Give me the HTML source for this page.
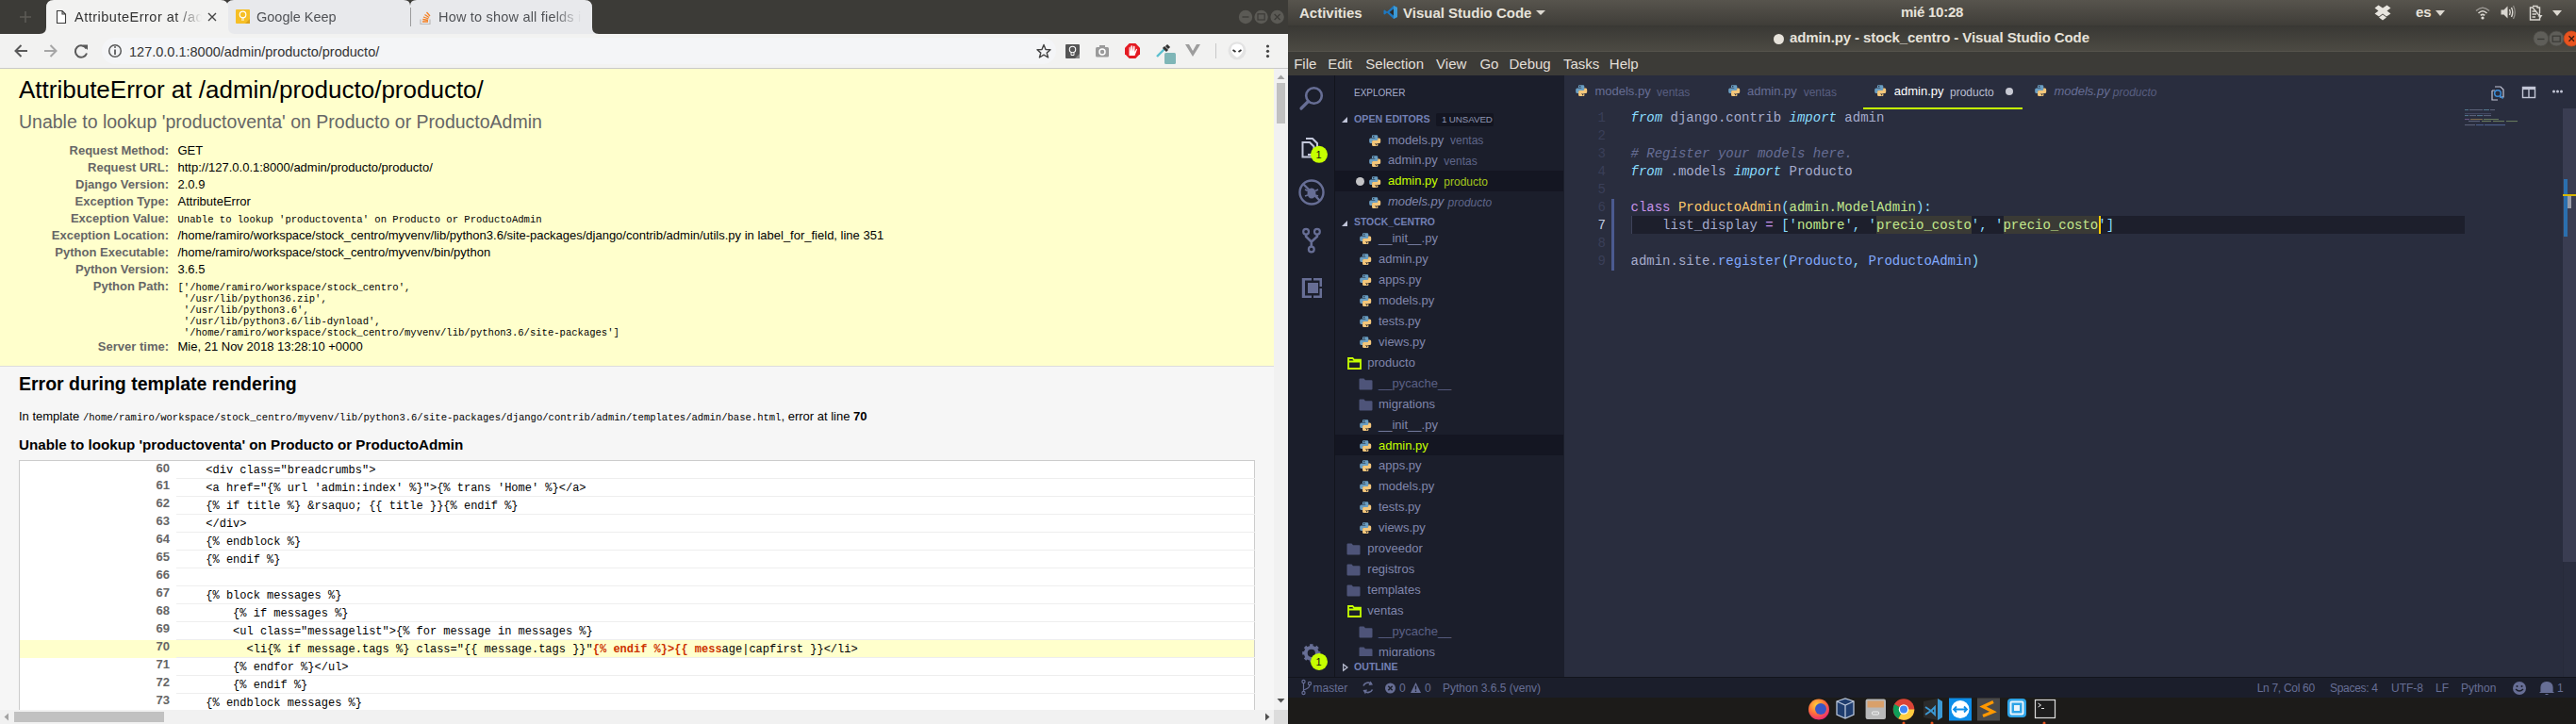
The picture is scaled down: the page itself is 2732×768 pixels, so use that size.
<!DOCTYPE html>
<html><head><meta charset="utf-8">
<style>
html,body{margin:0;padding:0;}
body{width:2732px;height:768px;overflow:hidden;position:relative;background:#1c1b19;font-family:"Liberation Sans",sans-serif;}
.abs{position:absolute;}
#chrome{position:absolute;left:0;top:0;width:1366px;height:768px;overflow:hidden;background:#f2f2f2;}
#tabbar{position:absolute;left:0;top:0;width:1366px;height:36px;background:#3c3b37;}
#toolbar{position:absolute;left:0;top:36px;width:1366px;height:36px;background:#f2f2f1;border-bottom:1px solid #c9c9c9;}
.tabt{font-size:14.5px;line-height:18px;color:#333;white-space:nowrap;overflow:hidden;-webkit-mask-image:linear-gradient(to right,#000 80%,transparent);}
#page{position:absolute;left:0;top:73px;width:1351px;height:680px;overflow:hidden;background:#fff;}
#vscroll{position:absolute;left:1351px;top:73px;width:15px;height:680px;background:#f1f1f1;}
#hscroll{position:absolute;left:0;top:753px;width:1351px;height:15px;background:#f1f1f1;}
#corner{position:absolute;left:1351px;top:753px;width:15px;height:15px;background:#dcdcdc;}

/* django */
#page h1,#page h2,#page h3,#page p,#page pre,#page table,#page th,#page td,#page code{margin:0;padding:0;}
#page{font-size:13px;color:#000;}
#summary{background:#ffc;padding:7px 20px 11px 20px;border-bottom:1px solid #ddd;}
#summary h1{font-weight:normal;font-size:26px;line-height:30px;}
#summary pre.ev{font-family:"Liberation Sans",sans-serif;color:#666;font-size:19.5px;line-height:22px;margin:8px 0 11px 0;}
#page table{border-collapse:collapse;}
#page table.meta{border:none;background:transparent;}
#page table.meta th{width:156px;text-align:right;color:#666;padding:2px 6.5px 2px 3px;vertical-align:top;font-weight:bold;line-height:14px;}
#page table.meta td{padding:2px 3px;vertical-align:top;line-height:14px;}
#page table.meta pre{font-family:"Liberation Mono",monospace;font-size:10.56px;line-height:12px;position:relative;top:2px;}
#page table.meta tr.pp td{padding-bottom:2px;}
#template{background:#f6f6f6;padding:6.5px 20px 10px 20px;}
#page #template h2{font-size:19.5px;line-height:22px;margin:0 0 16.5px 0;}
#page #template p{line-height:15px;}
#page #template p code{font-family:"Liberation Mono",monospace;font-size:10.56px;}
#page #template h3{font-size:15.2px;margin:11.7px 0 8.6px 0;line-height:17px;}
#page table.source{border:1px solid #ccc;width:100%;background:#fff;}
#page table.source th{width:156px;text-align:right;color:#666;padding:0.6px 6.5px 3.4px 3px;vertical-align:top;line-height:14px;}
#page table.source td{font-family:"Liberation Mono",monospace;font-size:12px;white-space:pre;border-bottom:1px solid #eee;padding:2.6px 3px 1.4px 3px;line-height:14px;}
#page tr.error th,#page tr.error td{background:#ffc;}
.specific{color:#cc3300;font-weight:bold;}

/* vscode */
.t{position:absolute;white-space:nowrap;font-family:"Liberation Sans",sans-serif;}
.mono{font-family:"Liberation Mono",monospace;}
.ic{position:absolute;overflow:visible;}
#vs{position:absolute;left:1366px;top:0;width:1366px;height:768px;overflow:hidden;background:#292d3e;}
#topbar{position:absolute;left:0;top:0;width:1366px;height:27px;background:linear-gradient(#57544d,#3f3d38);}
#titlebar{position:absolute;left:0;top:27px;width:1366px;height:28px;background:linear-gradient(#393834,#4c4a43);border-bottom:1px solid #55534b;box-sizing:border-box;}
#menubar{position:absolute;left:0;top:55px;width:1366px;height:25px;background:#3c3b37;}
#actbar{position:absolute;left:0;top:80px;width:49px;height:638px;background:#1b1e2b;border-right:1px solid #12141c;}
#sidebar{position:absolute;left:50px;top:80px;width:243px;height:638px;background:#1b1e2b;}
#editor{position:absolute;left:293px;top:80px;width:1073px;height:638px;background:#292d3e;}
#status{position:absolute;left:0;top:718px;width:1366px;height:22px;background:#1b1e2b;border-top:1px solid #12141c;box-sizing:border-box;}
#dock{position:absolute;left:0;top:740px;width:1366px;height:28px;background:#1c1b19;}
</style></head>
<body>
<div id="chrome">
  <div id="tabbar">
    <svg width="1366" height="36" style="position:absolute;left:0;top:0">
      <path d="M240 8 Q240 0 248 0 L428 0 Q435 0 435 6 Q435 0 442 0 L620 0 Q628 0 628 8 L628 29 Q628 36 635 36 L235 36 Q242 36 242 29 Z" fill="#e8e9ec"/>
      <path d="M42 36 Q49 36 49 29 L49 8 Q49 0 57 0 L234 0 Q242 0 242 8 L242 29 Q242 36 249 36 Z" fill="#f2f2f1"/>
      <line x1="435.5" y1="8" x2="435.5" y2="28" stroke="#9c9c9c" stroke-width="1"/>
      <path d="M21 18 H33 M27 12 V24" stroke="#5c5b56" stroke-width="1.6"/>
      <path d="M60.5 11.5 H66 L69.5 15 V24.5 H60.5 Z M66 11.5 V15 H69.5" fill="#fff" stroke="#3c3c3c" stroke-width="1.1"/>
      <path d="M221 14 L229 22 M229 14 L221 22" stroke="#444" stroke-width="1.4"/>
      <rect x="250" y="10" width="15" height="15" rx="1" fill="#f6bf26"/>
      <path d="M260 25 L265 20 V25 Z" fill="#dba11a"/>
      <circle cx="257.5" cy="15.5" r="3.3" fill="none" stroke="#fff" stroke-width="1.2"/>
      <path d="M256 19 H259 M256 21 H259" stroke="#fff" stroke-width="1"/>
      <path d="M446 20.5 V25.5 H456 V20.5" fill="none" stroke="#bcbbbb" stroke-width="1.2"/>
      <path d="M448 23 H454 M448.3 20.5 L454 21.5 M449 18 L454.5 20 M450.5 15.5 L455 18.5 M452.5 13 L456 17" stroke="#f48024" stroke-width="1.3"/>
      <circle cx="1321" cy="18" r="7.2" fill="#5b5a55"/>
      <circle cx="1337.6" cy="18" r="7.2" fill="#5b5a55"/>
      <circle cx="1354.6" cy="18" r="7.2" fill="#5b5a55"/>
      <path d="M1317.5 18 H1324.5" stroke="#3c3b37" stroke-width="1.3"/>
      <rect x="1334" y="14.8" width="7.2" height="6.2" fill="none" stroke="#3c3b37" stroke-width="1.2"/>
      <path d="M1351.6 15 L1357.6 21 M1357.6 15 L1351.6 21" stroke="#3c3b37" stroke-width="1.3"/>
    </svg>
    <div class="abs tabt" style="left:79px;top:9px;width:135px;letter-spacing:0.5px;">AttributeError at /admin/producto/producto/</div>
    <div class="abs tabt" style="left:272px;top:9px;width:150px;color:#505256;">Google Keep</div>
    <div class="abs tabt" style="left:465px;top:9px;width:152px;letter-spacing:0.2px;color:#505256;">How to show all fields in the Django admin</div>
  </div>
  <div id="toolbar">
    <div class="abs" style="left:108px;top:4px;width:1012px;height:28px;border-radius:14px;background:#f4f5f7;"></div>
    <svg width="1366" height="36" style="position:absolute;left:0;top:0">
      <path d="M29 18 H16.5 M22.5 12 L16.5 18 L22.5 24" fill="none" stroke="#5a5a5a" stroke-width="2"/>
      <path d="M47 18 H59.5 M53.5 12 L59.5 18 L53.5 24" fill="none" stroke="#a6a6a6" stroke-width="2"/>
      <path d="M91.5 15.5 A6.2 6.2 0 1 0 92 20.5" fill="none" stroke="#5a5a5a" stroke-width="2"/>
      <path d="M87.5 11.5 L93 11.5 L93 17 Z" fill="#5a5a5a"/>
      <circle cx="122" cy="18" r="6.3" fill="none" stroke="#5a5a5a" stroke-width="1.5"/>
      <path d="M122 16.5 V22" stroke="#5a5a5a" stroke-width="1.8"/>
      <circle cx="122" cy="14" r="1" fill="#5a5a5a"/>
      <path d="M1107 11.5 L1109 16.5 L1114 16.8 L1110.2 20.1 L1111.6 25 L1107 22.2 L1102.4 25 L1103.8 20.1 L1100 16.8 L1105 16.5 Z" fill="none" stroke="#444" stroke-width="1.4" stroke-linejoin="round"/>
      <rect x="1130" y="11" width="15" height="15" rx="1" fill="#555"/>
      <path d="M1140 26 L1145 21 V26 Z" fill="#888"/>
      <circle cx="1137.5" cy="16.5" r="3.2" fill="none" stroke="#fff" stroke-width="1.1"/>
      <path d="M1136 20 V22.5 H1139 V20" fill="none" stroke="#fff" stroke-width="1"/>
      <rect x="1162" y="14" width="14" height="10.5" rx="1.5" fill="#9a9a9a"/>
      <rect x="1166" y="12" width="6" height="3" fill="#9a9a9a"/>
      <circle cx="1169" cy="19" r="3" fill="none" stroke="#fff" stroke-width="1.5"/>
      <path d="M1197.7 10 H1204.3 L1209 14.7 V21.3 L1204.3 26 H1197.7 L1193 21.3 V14.7 Z" fill="#e41b23"/>
      <path d="M1197.5 23 V15 Q1197.5 13.5 1198.5 13.5 L1199 19 L1199.5 12.5 Q1201 12 1201 13 L1201.2 18.5 L1202 12.8 Q1203.5 12.5 1203.5 13.5 L1203.5 19 L1205 16 Q1206 15.5 1206 16.5 L1203.5 23 Z" fill="#fff"/>
      <path d="M1227 24 L1235 16" stroke="#5bbfcf" stroke-width="2.4"/>
      <path d="M1234 14 L1238 18 M1237 12 L1240 15" stroke="#333" stroke-width="3"/>
      <rect x="1235" y="20" width="12" height="12" rx="1.5" fill="#7fb6b7"/>
      <path d="M1257 11 L1265 24 L1273 11 H1269 L1265 18 L1261 11 Z" fill="#9d9d9d"/>
      <line x1="1289.5" y1="10" x2="1289.5" y2="26" stroke="#c8c8c8"/>
      <circle cx="1312" cy="17.7" r="9.5" fill="#e3e3e3"/>
      <path d="M1312 10.5 Q1318 10.5 1318.5 16.5 Q1318 22 1312 25 Q1306 22 1305.5 16.5 Q1306 10.5 1312 10.5 Z" fill="#fff"/>
      <path d="M1307.5 17 L1310.5 19 M1316.5 17 L1313.5 19" stroke="#333" stroke-width="1.8"/>
      <circle cx="1344.5" cy="13" r="1.6" fill="#444"/>
      <circle cx="1344.5" cy="18.3" r="1.6" fill="#444"/>
      <circle cx="1344.5" cy="23.6" r="1.6" fill="#444"/>
    </svg>
    <div class="abs" style="left:137px;top:10.5px;font-size:14.5px;line-height:16px;color:#333;white-space:nowrap;">127.0.0.1:8000/admin/producto/producto/</div>
  </div>
  <div id="page">
    <div id="summary">
      <h1>AttributeError at /admin/producto/producto/</h1>
      <pre class="ev">Unable to lookup 'productoventa' on Producto or ProductoAdmin</pre>
      <table class="meta">
        <tr><th>Request Method:</th><td>GET</td></tr>
        <tr><th>Request URL:</th><td>http://127.0.0.1:8000/admin/producto/producto/</td></tr>
        <tr><th>Django Version:</th><td>2.0.9</td></tr>
        <tr><th>Exception Type:</th><td>AttributeError</td></tr>
        <tr><th>Exception Value:</th><td><pre>Unable to lookup 'productoventa' on Producto or ProductoAdmin</pre></td></tr>
        <tr><th>Exception Location:</th><td>/home/ramiro/workspace/stock_centro/myvenv/lib/python3.6/site-packages/django/contrib/admin/utils.py in label_for_field, line 351</td></tr>
        <tr><th>Python Executable:</th><td>/home/ramiro/workspace/stock_centro/myvenv/bin/python</td></tr>
        <tr><th>Python Version:</th><td>3.6.5</td></tr>
        <tr class="pp"><th>Python Path:</th><td><pre>['/home/ramiro/workspace/stock_centro',
 '/usr/lib/python36.zip',
 '/usr/lib/python3.6',
 '/usr/lib/python3.6/lib-dynload',
 '/home/ramiro/workspace/stock_centro/myvenv/lib/python3.6/site-packages']</pre></td></tr>
        <tr><th>Server time:</th><td>Mie, 21 Nov 2018 13:28:10 +0000</td></tr>
      </table>
    </div>
    <div id="template">
      <h2>Error during template rendering</h2>
      <p>In template <code>/home/ramiro/workspace/stock_centro/myvenv/lib/python3.6/site-packages/django/contrib/admin/templates/admin/base.html</code>, error at line <strong>70</strong></p>
      <h3>Unable to lookup 'productoventa' on Producto or ProductoAdmin</h3>
      <table class="source">
        <tr><th>60</th><td>    &lt;div class="breadcrumbs"&gt;</td></tr>
        <tr><th>61</th><td>    &lt;a href="{% url 'admin:index' %}"&gt;{% trans 'Home' %}&lt;/a&gt;</td></tr>
        <tr><th>62</th><td>    {% if title %} &amp;rsaquo; {{ title }}{% endif %}</td></tr>
        <tr><th>63</th><td>    &lt;/div&gt;</td></tr>
        <tr><th>64</th><td>    {% endblock %}</td></tr>
        <tr><th>65</th><td>    {% endif %}</td></tr>
        <tr><th>66</th><td>    </td></tr>
        <tr><th>67</th><td>    {% block messages %}</td></tr>
        <tr><th>68</th><td>        {% if messages %}</td></tr>
        <tr><th>69</th><td>        &lt;ul class="messagelist"&gt;{% for message in messages %}</td></tr>
        <tr class="error"><th>70</th><td>          &lt;li{% if message.tags %} class="{{ message.tags }}"<span class="specific">{% endif %}&gt;{{ mess</span>age|capfirst }}&lt;/li&gt;</td></tr>
        <tr><th>71</th><td>        {% endfor %}&lt;/ul&gt;</td></tr>
        <tr><th>72</th><td>        {% endif %}</td></tr>
        <tr><th>73</th><td>    {% endblock messages %}</td></tr>
        <tr><th>74</th><td>    </td></tr>
      </table>
    </div>
  </div>
  <div id="vscroll">
    <svg width="15" height="680" style="position:absolute;left:0;top:0">
      <path d="M3.5 11 L7.5 6.5 L11.5 11 Z" fill="#a3a3a3"/>
      <rect x="3" y="15" width="9" height="43" fill="#c1c1c1"/>
      <path d="M3.5 668 L7.5 672.5 L11.5 668 Z" fill="#505050"/>
    </svg>
  </div>
  <div id="hscroll">
    <svg width="1351" height="15" style="position:absolute;left:0;top:0">
      <path d="M9 3.5 L4.5 7.5 L9 11.5 Z" fill="#a3a3a3"/>
      <rect x="15" y="2" width="159" height="11" fill="#c1c1c1"/>
      <path d="M1342 3.5 L1346.5 7.5 L1342 11.5 Z" fill="#505050"/>
    </svg>
  </div>
  <div id="corner"></div>
</div>

<div id="vs">
<svg width="0" height="0" style="position:absolute"><defs><g id="py"><path d="M4.2 0.3 H8.3 Q9.8 0.3 9.8 1.8 V5.2 Q9.8 6.6 8.4 6.6 H4.6 Q3.4 6.6 3.4 7.8 V9.4 H1.6 Q0.2 9.4 0.2 7.6 V5.2 Q0.2 3.6 1.8 3.6 H6.6 V3.1 H3.1 V1.6 Q3.1 0.3 4.2 0.3 Z" fill="#6a9ec2"/><path d="M8.8 12.7 H4.7 Q3.2 12.7 3.2 11.2 V7.8 Q3.2 6.4 4.6 6.4 H8.4 Q9.6 6.4 9.6 5.2 V3.6 H11.4 Q12.8 3.6 12.8 5.4 V7.8 Q12.8 9.4 11.2 9.4 H6.4 V9.9 H9.9 V11.4 Q9.9 12.7 8.8 12.7 Z" fill="#f4c77b"/><circle cx="5" cy="1.8" r="0.7" fill="#1b1e2b"/><circle cx="8" cy="11.2" r="0.7" fill="#1b1e2b"/></g></defs></svg>
<div id="topbar"></div>
<div class="t" style="left:12px;top:3.60px;font-size:15px;line-height:20px;color:#e6e2da;font-weight:bold;font-style:normal;">Activities</div>
<svg class="ic" style="left:101px;top:5px" width="16" height="16" viewBox="0 0 16 16"><path d="M11 1 L15 3 V13 L11 15 L4 8.5 L1.5 10.5 L0.5 10 V6 L1.5 5.5 L4 7.5 Z" fill="#1d78c1"/><path d="M11 4.5 V11.5 L6.5 8 Z" fill="#2a2a2a"/><path d="M11 1 L15 3 V13 L11 15 Z" fill="#3c99d4"/></svg>
<div class="t" style="left:122px;top:3.60px;font-size:15px;line-height:20px;color:#e6e2da;font-weight:bold;font-style:normal;">Visual Studio Code</div>
<svg class="ic" style="left:263px;top:10.5px" width="10" height="5"><path d="M0 0 H10 L5 5 Z" fill="#dcd8d0"/></svg>
<div class="t" style="left:650px;top:3.00px;font-size:15px;line-height:20px;color:#e6e2da;font-weight:bold;font-style:normal;letter-spacing:-0.25px;">mi&eacute; 10:28</div>
<svg class="ic" style="left:1152px;top:5px" width="18" height="17" viewBox="0 0 18 17"><path d="M4.5 0.5 L9 3.5 L13.5 0.5 L17.5 3.5 L13.5 6.5 L17.5 9.5 L13 12.5 L9 9.5 L5 12.5 L0.5 9.5 L4.5 6.5 L0.5 3.5 Z M5 13.5 L9 10.5 L13 13.5 L9 16.5 Z" fill="#e8e5df"/></svg>
<div class="t" style="left:1196px;top:3.40px;font-size:15px;line-height:20px;color:#e6e2da;font-weight:bold;font-style:normal;">es</div>
<svg class="ic" style="left:1217px;top:10.5px" width="10" height="6"><path d="M0 0 H10 L5 6 Z" fill="#dcd8d0"/></svg>
<svg class="ic" style="left:1259px;top:6px" width="16" height="15" viewBox="0 0 16 15"><path d="M1 5.5 Q8 -1 15 5.5" fill="none" stroke="#9b9893" stroke-width="1.6"/><path d="M3.5 8 Q8 3.5 12.5 8" fill="none" stroke="#d9d6d0" stroke-width="1.6"/><path d="M5.8 10.3 Q8 8.3 10.2 10.3" fill="none" stroke="#d9d6d0" stroke-width="1.6"/><circle cx="8" cy="13" r="1.6" fill="#e0ddd7"/></svg>
<svg class="ic" style="left:1286px;top:5px" width="17" height="16" viewBox="0 0 17 16"><path d="M0.5 5.5 H3.5 L7.5 1.5 V14.5 L3.5 10.5 H0.5 Z" fill="#d9d6d0"/><path d="M9.5 5 Q11 8 9.5 11" fill="none" stroke="#d9d6d0" stroke-width="1.4"/><path d="M11.5 3 Q14 8 11.5 13" fill="none" stroke="#d9d6d0" stroke-width="1.4"/><path d="M13.5 1 Q17 8 13.5 15" fill="none" stroke="#8f8c87" stroke-width="1.3"/></svg>
<svg class="ic" style="left:1316px;top:5px" width="16" height="17" viewBox="0 0 16 17"><path d="M4 1.5 H9 V3 H11.5 V9 M11.5 12 V16 H1.5 V3 H4 Z" fill="none" stroke="#d9d6d0" stroke-width="1.4"/><path d="M3.5 7 H8 M3.5 10 H8 M3.5 13 H7" stroke="#d9d6d0" stroke-width="1.4"/><path d="M12 8 L9.5 12.5 H12 L11 16 L14.5 11 H12 Z" fill="#d9d6d0"/></svg>
<svg class="ic" style="left:1341px;top:10.5px" width="10" height="6"><path d="M0 0 H10 L5 6 Z" fill="#dcd8d0"/></svg>
<div id="titlebar"></div>
<div class="abs" style="left:515px;top:35.5px;width:11px;height:11px;border-radius:50%;background:#e6e2da;"></div>
<div class="t" style="left:532px;top:30.10px;font-size:15px;line-height:20px;color:#e6e2da;font-weight:bold;font-style:normal;letter-spacing:-0.1px;">admin.py - stock_centro - Visual Studio Code</div>
<svg class="ic" style="left:1318px;top:31px" width="48" height="20">
<circle cx="10.8" cy="10" r="8" fill="#5f5e59" stroke="#4a4944" stroke-width="0.8"/>
<circle cx="27.2" cy="10" r="8" fill="#5f5e59" stroke="#4a4944" stroke-width="0.8"/>
<circle cx="43.2" cy="10" r="8" fill="#e9541f" stroke="#c9461a" stroke-width="0.8"/>
<path d="M7 10.5 H14.5" stroke="#3a3935" stroke-width="1.3"/>
<rect x="23.2" y="7.2" width="8" height="6" fill="none" stroke="#3a3935" stroke-width="1.2"/>
<path d="M40.5 7.3 L46 12.8 M46 7.3 L40.5 12.8" stroke="#3a1a10" stroke-width="1.3"/>
</svg>
<div id="menubar"></div>
<div class="t" style="left:6.2px;top:57.70px;font-size:15px;line-height:20px;color:#e2dfd7;font-weight:normal;font-style:normal;">File</div>
<div class="t" style="left:42.2px;top:57.70px;font-size:15px;line-height:20px;color:#e2dfd7;font-weight:normal;font-style:normal;">Edit</div>
<div class="t" style="left:82.3px;top:57.70px;font-size:15px;line-height:20px;color:#e2dfd7;font-weight:normal;font-style:normal;">Selection</div>
<div class="t" style="left:157.1px;top:57.70px;font-size:15px;line-height:20px;color:#e2dfd7;font-weight:normal;font-style:normal;">View</div>
<div class="t" style="left:203.4px;top:57.70px;font-size:15px;line-height:20px;color:#e2dfd7;font-weight:normal;font-style:normal;">Go</div>
<div class="t" style="left:234.5px;top:57.70px;font-size:15px;line-height:20px;color:#e2dfd7;font-weight:normal;font-style:normal;">Debug</div>
<div class="t" style="left:291.9px;top:57.70px;font-size:15px;line-height:20px;color:#e2dfd7;font-weight:normal;font-style:normal;">Tasks</div>
<div class="t" style="left:340.8px;top:57.70px;font-size:15px;line-height:20px;color:#e2dfd7;font-weight:normal;font-style:normal;">Help</div>
<div id="actbar"></div>
<svg class="ic" style="left:0;top:80px" width="49" height="640"><circle cx="27.5" cy="21.5" r="8.3" fill="none" stroke="#676e95" stroke-width="2.6"/><path d="M21.5 27.5 L14 35" stroke="#676e95" stroke-width="3.2" stroke-linecap="round"/><path d="M19 67 H26 L31 72 V84 H21" fill="none" stroke="#c3c7da" stroke-width="2"/><path d="M15.5 71 H23 L27.5 75.5 V86.5 H15.5 Z" fill="none" stroke="#c3c7da" stroke-width="2"/><circle cx="33" cy="83.8" r="9" fill="#c6ff00"/><circle cx="25" cy="124" r="12.5" fill="none" stroke="#676e95" stroke-width="2.4"/><path d="M16 115 L34 133" stroke="#676e95" stroke-width="2.4"/><ellipse cx="25" cy="125" rx="4.5" ry="5.5" fill="#676e95"/><path d="M18 121 L21 122.5 M32 121 L29 122.5 M18 128 L21 127 M32 128 L29 127" stroke="#676e95" stroke-width="1.6"/><circle cx="19.1" cy="165.8" r="2.9" fill="none" stroke="#676e95" stroke-width="2.2"/><circle cx="30.9" cy="165.8" r="2.9" fill="none" stroke="#676e95" stroke-width="2.2"/><circle cx="24.8" cy="184.5" r="2.9" fill="none" stroke="#676e95" stroke-width="2.2"/><path d="M19.1 168.8 V171 L24.8 176.5 V181.5 M30.9 168.8 V171 L24.8 176.5" fill="none" stroke="#676e95" stroke-width="2.6"/><path d="M14.8 214.9 H25 V217.5 H18 V233.5 H25 V236 H14.8 Z" fill="#676e95"/><path d="M27 214.9 H36 V224 H33.5 V217.5 H27 Z" fill="#676e95"/><path d="M27 233.5 H33.5 V226 H36 V236 H27 Z" fill="#676e95"/><rect x="21" y="220" width="11" height="11" fill="#676e95"/><g transform="translate(24.8,612.8)"><circle r="6" fill="none" stroke="#676e95" stroke-width="3.8"/><rect x="-1.7" y="-9.6" width="3.4" height="4" fill="#676e95" transform="rotate(0)"/><rect x="-1.7" y="-9.6" width="3.4" height="4" fill="#676e95" transform="rotate(45)"/><rect x="-1.7" y="-9.6" width="3.4" height="4" fill="#676e95" transform="rotate(90)"/><rect x="-1.7" y="-9.6" width="3.4" height="4" fill="#676e95" transform="rotate(135)"/><rect x="-1.7" y="-9.6" width="3.4" height="4" fill="#676e95" transform="rotate(180)"/><rect x="-1.7" y="-9.6" width="3.4" height="4" fill="#676e95" transform="rotate(225)"/><rect x="-1.7" y="-9.6" width="3.4" height="4" fill="#676e95" transform="rotate(270)"/><rect x="-1.7" y="-9.6" width="3.4" height="4" fill="#676e95" transform="rotate(315)"/></g><circle cx="33" cy="621.9" r="9" fill="#c6ff00"/></svg>
<div class="t" style="left:29.5px;top:156.99px;font-size:11px;line-height:14px;color:#111;font-weight:normal;font-style:normal;">1</div>
<div class="t" style="left:29.5px;top:695.09px;font-size:11px;line-height:14px;color:#111;font-weight:normal;font-style:normal;">1</div>
<div id="sidebar"></div>
<div class="t" style="left:70px;top:91.53px;font-size:10px;line-height:14px;color:#a6accd;font-weight:normal;font-style:normal;">EXPLORER</div>
<svg class="ic" style="left:57px;top:124px" width="7" height="7"><path d="M6 0 V6 H0 Z" fill="#c0c4d8"/></svg>
<div class="t" style="left:70px;top:119.29px;font-size:10.7px;line-height:14px;color:#7380b5;font-weight:bold;font-style:normal;">OPEN EDITORS</div>
<div class="abs" style="left:157px;top:120px;width:61px;height:13.5px;background:#131521;border-radius:2px;"></div>
<div class="t" style="left:162.9px;top:119.80px;font-size:9.8px;line-height:14px;color:#8f95b3;font-weight:normal;font-style:normal;letter-spacing:-0.1px;">1 UNSAVED</div>
<div class="abs" style="left:50px;top:181px;width:242px;height:22px;background:#141622;"></div>
<svg class="ic" style="left:85.8px;top:143.0px" width="12.4" height="12.4" viewBox="0 0 13 13"><use href="#py"/></svg>
<div class="t" style="left:106px;top:137.80px;font-size:13px;line-height:22px;color:#8086ac;font-weight:normal;font-style:normal;">models.py</div>
<div class="t" style="left:172px;top:138.14px;font-size:12px;line-height:22px;color:#5f668a;font-weight:normal;font-style:normal;">ventas</div>
<svg class="ic" style="left:85.8px;top:164.6px" width="12.4" height="12.4" viewBox="0 0 13 13"><use href="#py"/></svg>
<div class="t" style="left:106px;top:159.40px;font-size:13px;line-height:22px;color:#8086ac;font-weight:normal;font-style:normal;">admin.py</div>
<div class="t" style="left:165.3px;top:159.74px;font-size:12px;line-height:22px;color:#5f668a;font-weight:normal;font-style:normal;">ventas</div>
<svg class="ic" style="left:85.8px;top:186.5px" width="12.4" height="12.4" viewBox="0 0 13 13"><use href="#py"/></svg>
<div class="t" style="left:106px;top:181.30px;font-size:13px;line-height:22px;color:#c6ff00;font-weight:normal;font-style:normal;">admin.py</div>
<div class="t" style="left:165.3px;top:181.64px;font-size:12px;line-height:22px;color:#a4c71c;font-weight:normal;font-style:normal;">producto</div>
<svg class="ic" style="left:85.8px;top:208.6px" width="12.4" height="12.4" viewBox="0 0 13 13"><use href="#py"/></svg>
<div class="t" style="left:106px;top:203.40px;font-size:13px;line-height:22px;color:#8086ac;font-weight:normal;font-style:italic;">models.py</div>
<div class="t" style="left:169.6px;top:203.74px;font-size:12px;line-height:22px;color:#5f668a;font-weight:normal;font-style:italic;">producto</div>
<div class="abs" style="left:71.5px;top:188.3px;width:9px;height:9px;border-radius:50%;background:#c3c3c6;"></div>
<svg class="ic" style="left:57px;top:233.5px" width="7" height="7"><path d="M6 0 V6 H0 Z" fill="#c0c4d8"/></svg>
<div class="t" style="left:70px;top:228.90px;font-size:10.4px;line-height:14px;color:#7380b5;font-weight:bold;font-style:normal;">STOCK_CENTRO</div>
<div class="abs" style="left:50px;top:460.5px;width:242px;height:22.3px;background:#141622;"></div>
<div class="abs" style="left:0;top:0;width:1366px;height:696px;overflow:hidden;"><svg class="ic" style="left:75.5px;top:247.0px" width="12.4" height="12.4" viewBox="0 0 13 13"><use href="#py"/></svg><div class="t" style="left:96px;top:242.00px;font-size:13px;line-height:22px;color:#8086ac;font-weight:normal;font-style:normal;">__init__.py</div><svg class="ic" style="left:75.5px;top:268.95px" width="12.4" height="12.4" viewBox="0 0 13 13"><use href="#py"/></svg><div class="t" style="left:96px;top:263.95px;font-size:13px;line-height:22px;color:#8086ac;font-weight:normal;font-style:normal;">admin.py</div><svg class="ic" style="left:75.5px;top:290.9px" width="12.4" height="12.4" viewBox="0 0 13 13"><use href="#py"/></svg><div class="t" style="left:96px;top:285.90px;font-size:13px;line-height:22px;color:#8086ac;font-weight:normal;font-style:normal;">apps.py</div><svg class="ic" style="left:75.5px;top:312.85px" width="12.4" height="12.4" viewBox="0 0 13 13"><use href="#py"/></svg><div class="t" style="left:96px;top:307.85px;font-size:13px;line-height:22px;color:#8086ac;font-weight:normal;font-style:normal;">models.py</div><svg class="ic" style="left:75.5px;top:334.8px" width="12.4" height="12.4" viewBox="0 0 13 13"><use href="#py"/></svg><div class="t" style="left:96px;top:329.80px;font-size:13px;line-height:22px;color:#8086ac;font-weight:normal;font-style:normal;">tests.py</div><svg class="ic" style="left:75.5px;top:356.75px" width="12.4" height="12.4" viewBox="0 0 13 13"><use href="#py"/></svg><div class="t" style="left:96px;top:351.75px;font-size:13px;line-height:22px;color:#8086ac;font-weight:normal;font-style:normal;">views.py</div><svg class="ic" style="left:62.5px;top:378.8px" width="15" height="13" viewBox="0 0 15 13"><path d="M1 1 H5.5 L7 2.7 H14 V12 H1 Z M1 4.5 H14" fill="none" stroke="#c6ff00" stroke-width="1.8"/></svg><div class="t" style="left:84.3px;top:373.70px;font-size:13px;line-height:22px;color:#8086ac;font-weight:normal;font-style:normal;">producto</div><svg class="ic" style="left:74.6px;top:400.75px" width="15" height="13" viewBox="0 0 15 13"><path d="M0.5 1.5 Q0.5 0.5 1.5 0.5 H5.5 L7 2.2 H13.5 Q14.5 2.2 14.5 3.2 V11.5 Q14.5 12.5 13.5 12.5 H1.5 Q0.5 12.5 0.5 11.5 Z" fill="#4e5479"/></svg><div class="t" style="left:96px;top:395.65px;font-size:13px;line-height:22px;color:#5b6186;font-weight:normal;font-style:normal;">__pycache__</div><svg class="ic" style="left:74.6px;top:422.70000000000005px" width="15" height="13" viewBox="0 0 15 13"><path d="M0.5 1.5 Q0.5 0.5 1.5 0.5 H5.5 L7 2.2 H13.5 Q14.5 2.2 14.5 3.2 V11.5 Q14.5 12.5 13.5 12.5 H1.5 Q0.5 12.5 0.5 11.5 Z" fill="#4e5479"/></svg><div class="t" style="left:96px;top:417.60px;font-size:13px;line-height:22px;color:#8086ac;font-weight:normal;font-style:normal;">migrations</div><svg class="ic" style="left:75.5px;top:444.54999999999995px" width="12.4" height="12.4" viewBox="0 0 13 13"><use href="#py"/></svg><div class="t" style="left:96px;top:439.55px;font-size:13px;line-height:22px;color:#8086ac;font-weight:normal;font-style:normal;">__init__.py</div><svg class="ic" style="left:75.5px;top:466.5px" width="12.4" height="12.4" viewBox="0 0 13 13"><use href="#py"/></svg><div class="t" style="left:96px;top:461.50px;font-size:13px;line-height:22px;color:#c6ff00;font-weight:normal;font-style:normal;">admin.py</div><svg class="ic" style="left:75.5px;top:488.45px" width="12.4" height="12.4" viewBox="0 0 13 13"><use href="#py"/></svg><div class="t" style="left:96px;top:483.45px;font-size:13px;line-height:22px;color:#8086ac;font-weight:normal;font-style:normal;">apps.py</div><svg class="ic" style="left:75.5px;top:510.4px" width="12.4" height="12.4" viewBox="0 0 13 13"><use href="#py"/></svg><div class="t" style="left:96px;top:505.40px;font-size:13px;line-height:22px;color:#8086ac;font-weight:normal;font-style:normal;">models.py</div><svg class="ic" style="left:75.5px;top:532.3499999999999px" width="12.4" height="12.4" viewBox="0 0 13 13"><use href="#py"/></svg><div class="t" style="left:96px;top:527.35px;font-size:13px;line-height:22px;color:#8086ac;font-weight:normal;font-style:normal;">tests.py</div><svg class="ic" style="left:75.5px;top:554.3px" width="12.4" height="12.4" viewBox="0 0 13 13"><use href="#py"/></svg><div class="t" style="left:96px;top:549.30px;font-size:13px;line-height:22px;color:#8086ac;font-weight:normal;font-style:normal;">views.py</div><svg class="ic" style="left:62px;top:576.35px" width="15" height="13" viewBox="0 0 15 13"><path d="M0.5 1.5 Q0.5 0.5 1.5 0.5 H5.5 L7 2.2 H13.5 Q14.5 2.2 14.5 3.2 V11.5 Q14.5 12.5 13.5 12.5 H1.5 Q0.5 12.5 0.5 11.5 Z" fill="#4e5479"/></svg><div class="t" style="left:84.3px;top:571.25px;font-size:13px;line-height:22px;color:#8086ac;font-weight:normal;font-style:normal;">proveedor</div><svg class="ic" style="left:62px;top:598.3000000000001px" width="15" height="13" viewBox="0 0 15 13"><path d="M0.5 1.5 Q0.5 0.5 1.5 0.5 H5.5 L7 2.2 H13.5 Q14.5 2.2 14.5 3.2 V11.5 Q14.5 12.5 13.5 12.5 H1.5 Q0.5 12.5 0.5 11.5 Z" fill="#4e5479"/></svg><div class="t" style="left:84.3px;top:593.20px;font-size:13px;line-height:22px;color:#8086ac;font-weight:normal;font-style:normal;">registros</div><svg class="ic" style="left:62px;top:620.25px" width="15" height="13" viewBox="0 0 15 13"><path d="M0.5 1.5 Q0.5 0.5 1.5 0.5 H5.5 L7 2.2 H13.5 Q14.5 2.2 14.5 3.2 V11.5 Q14.5 12.5 13.5 12.5 H1.5 Q0.5 12.5 0.5 11.5 Z" fill="#4e5479"/></svg><div class="t" style="left:84.3px;top:615.15px;font-size:13px;line-height:22px;color:#8086ac;font-weight:normal;font-style:normal;">templates</div><svg class="ic" style="left:62.5px;top:642.1999999999999px" width="15" height="13" viewBox="0 0 15 13"><path d="M1 1 H5.5 L7 2.7 H14 V12 H1 Z M1 4.5 H14" fill="none" stroke="#c6ff00" stroke-width="1.8"/></svg><div class="t" style="left:84.3px;top:637.10px;font-size:13px;line-height:22px;color:#8086ac;font-weight:normal;font-style:normal;">ventas</div><svg class="ic" style="left:74.6px;top:664.15px" width="15" height="13" viewBox="0 0 15 13"><path d="M0.5 1.5 Q0.5 0.5 1.5 0.5 H5.5 L7 2.2 H13.5 Q14.5 2.2 14.5 3.2 V11.5 Q14.5 12.5 13.5 12.5 H1.5 Q0.5 12.5 0.5 11.5 Z" fill="#4e5479"/></svg><div class="t" style="left:96px;top:659.05px;font-size:13px;line-height:22px;color:#5b6186;font-weight:normal;font-style:normal;">__pycache__</div><svg class="ic" style="left:74.6px;top:686.1px" width="15" height="13" viewBox="0 0 15 13"><path d="M0.5 1.5 Q0.5 0.5 1.5 0.5 H5.5 L7 2.2 H13.5 Q14.5 2.2 14.5 3.2 V11.5 Q14.5 12.5 13.5 12.5 H1.5 Q0.5 12.5 0.5 11.5 Z" fill="#4e5479"/></svg><div class="t" style="left:96px;top:681.00px;font-size:13px;line-height:22px;color:#8086ac;font-weight:normal;font-style:normal;">migrations</div></div>
<svg class="ic" style="left:57.5px;top:703.5px" width="6" height="8"><path d="M0.7 0.7 L5 4 L0.7 7.3 Z" fill="none" stroke="#c0c4d8" stroke-width="1.2"/></svg>
<div class="t" style="left:70px;top:700.33px;font-size:10.6px;line-height:14px;color:#7380b5;font-weight:bold;font-style:normal;">OUTLINE</div>
<div id="editor"></div>
<svg class="ic" style="left:304.6px;top:89.5px" width="12.4" height="12.4" viewBox="0 0 13 13"><use href="#py"/></svg>
<div class="t" style="left:325.4px;top:87.30px;font-size:13px;line-height:20px;color:#676e95;font-weight:normal;font-style:normal;">models.py</div>
<div class="t" style="left:391px;top:87.64px;font-size:12px;line-height:20px;color:#585e80;font-weight:normal;font-style:normal;">ventas</div>
<svg class="ic" style="left:467px;top:89.5px" width="12.4" height="12.4" viewBox="0 0 13 13"><use href="#py"/></svg>
<div class="t" style="left:487px;top:87.30px;font-size:13px;line-height:20px;color:#676e95;font-weight:normal;font-style:normal;">admin.py</div>
<div class="t" style="left:546.7px;top:87.64px;font-size:12px;line-height:20px;color:#585e80;font-weight:normal;font-style:normal;">ventas</div>
<svg class="ic" style="left:622px;top:89.5px" width="12.4" height="12.4" viewBox="0 0 13 13"><use href="#py"/></svg>
<div class="t" style="left:642.8px;top:87.30px;font-size:13px;line-height:20px;color:#ffffff;font-weight:normal;font-style:normal;">admin.py</div>
<div class="t" style="left:702px;top:87.64px;font-size:12px;line-height:20px;color:#b9bdd0;font-weight:normal;font-style:normal;">producto</div>
<svg class="ic" style="left:792px;top:89.5px" width="12.4" height="12.4" viewBox="0 0 13 13"><use href="#py"/></svg>
<div class="t" style="left:812.4px;top:87.30px;font-size:13px;line-height:20px;color:#676e95;font-weight:normal;font-style:italic;">models.py</div>
<div class="t" style="left:874.8px;top:87.64px;font-size:12px;line-height:20px;color:#585e80;font-weight:normal;font-style:italic;">producto</div>
<div class="abs" style="left:761px;top:93px;width:8px;height:8px;border-radius:50%;background:#c7c9d3;"></div>
<div class="abs" style="left:610px;top:113.5px;width:169px;height:2px;background:#c6ff00;"></div>
<svg class="ic" style="left:1274px;top:89px" width="80" height="20"><path d="M6 3 H12 L15 6 V14 H11" fill="none" stroke="#c3c6d6" stroke-width="1.2"/><path d="M3 7 H6 M3 7 V17 H9" fill="none" stroke="#c3c6d6" stroke-width="1.2"/><circle cx="9" cy="10" r="3.3" fill="none" stroke="#3d8fd9" stroke-width="1.5"/><path d="M11.3 12.3 L14.5 15.5" stroke="#3d8fd9" stroke-width="1.6"/><rect x="35.5" y="3.5" width="13" height="11" fill="none" stroke="#c3c6d6" stroke-width="1.4"/><path d="M35.5 5 H48.5" stroke="#c3c6d6" stroke-width="2.2"/><path d="M42 4 V14.5" stroke="#c3c6d6" stroke-width="1.4"/><circle cx="68.5" cy="8" r="1.5" fill="#c3c6d6"/><circle cx="72.5" cy="8" r="1.5" fill="#c3c6d6"/><circle cx="76.5" cy="8" r="1.5" fill="#c3c6d6"/></svg>
<div class="abs" style="left:363.8px;top:229px;width:884px;height:19px;background:#1d1f2c;border-left:1px solid #3e4259;box-sizing:border-box;"></div>
<div class="abs" style="left:624px;top:229px;width:100.8px;height:19px;background:#3a3a35;"></div>
<div class="abs" style="left:758.8px;top:229px;width:100.9px;height:19px;background:#3a3a35;"></div>
<div class="abs" style="left:859.8px;top:229px;width:2px;height:19px;background:#ffcc00;"></div>
<div class="abs" style="left:342.5px;top:210.5px;width:3px;height:76px;background:#4b5a90;"></div>
<div class="t mono" style="left:323px;top:115.97px;font-size:14px;line-height:19px;color:#3a3f58;width:14px;text-align:right;">1</div>
<div class="t mono" style="left:323px;top:134.97px;font-size:14px;line-height:19px;color:#3a3f58;width:14px;text-align:right;">2</div>
<div class="t mono" style="left:323px;top:153.97px;font-size:14px;line-height:19px;color:#3a3f58;width:14px;text-align:right;">3</div>
<div class="t mono" style="left:323px;top:172.97px;font-size:14px;line-height:19px;color:#3a3f58;width:14px;text-align:right;">4</div>
<div class="t mono" style="left:323px;top:191.97px;font-size:14px;line-height:19px;color:#3a3f58;width:14px;text-align:right;">5</div>
<div class="t mono" style="left:323px;top:210.97px;font-size:14px;line-height:19px;color:#3a3f58;width:14px;text-align:right;">6</div>
<div class="t mono" style="left:323px;top:229.97px;font-size:14px;line-height:19px;color:#c3cee3;width:14px;text-align:right;">7</div>
<div class="t mono" style="left:323px;top:248.97px;font-size:14px;line-height:19px;color:#3a3f58;width:14px;text-align:right;">8</div>
<div class="t mono" style="left:323px;top:267.97px;font-size:14px;line-height:19px;color:#3a3f58;width:14px;text-align:right;">9</div>
<div class="t mono" style="left:363.5px;top:115.97px;font-size:14px;line-height:19px;color:#a6accd;white-space:pre;"><span style="color:#89ddff;font-style:italic;">from</span><span style="color:#a6accd;"> django.contrib </span><span style="color:#89ddff;font-style:italic;">import</span><span style="color:#a6accd;"> admin</span></div>
<div class="t mono" style="left:363.5px;top:153.97px;font-size:14px;line-height:19px;color:#a6accd;white-space:pre;"><span style="color:#676e95;font-style:italic;"># Register your models here.</span></div>
<div class="t mono" style="left:363.5px;top:172.97px;font-size:14px;line-height:19px;color:#a6accd;white-space:pre;"><span style="color:#89ddff;font-style:italic;">from</span><span style="color:#a6accd;"> .models </span><span style="color:#89ddff;font-style:italic;">import</span><span style="color:#a6accd;"> Producto</span></div>
<div class="t mono" style="left:363.5px;top:210.97px;font-size:14px;line-height:19px;color:#a6accd;white-space:pre;"><span style="color:#c792ea;">class</span><span style="color:#a6accd;"> </span><span style="color:#ffcb6b;">ProductoAdmin</span><span style="color:#89ddff;">(</span><span style="color:#c3e88d;">admin.ModelAdmin</span><span style="color:#89ddff;">):</span></div>
<div class="t mono" style="left:363.5px;top:229.97px;font-size:14px;line-height:19px;color:#a6accd;white-space:pre;"><span style="color:#a6accd;">    list_display </span><span style="color:#c792ea;">=</span><span style="color:#a6accd;"> </span><span style="color:#89ddff;">['</span><span style="color:#c3e88d;">nombre</span><span style="color:#89ddff;">', '</span><span style="color:#c3e88d;">precio_costo</span><span style="color:#89ddff;">', '</span><span style="color:#c3e88d;">precio_costo</span><span style="color:#89ddff;">']</span></div>
<div class="t mono" style="left:363.5px;top:267.97px;font-size:14px;line-height:19px;color:#a6accd;white-space:pre;"><span style="color:#a6accd;">admin.site.</span><span style="color:#82aaff;">register</span><span style="color:#89ddff;">(</span><span style="color:#82aaff;">Producto</span><span style="color:#89ddff;">, </span><span style="color:#82aaff;">ProductoAdmin</span><span style="color:#89ddff;">)</span></div>
<svg class="ic" style="left:1248px;top:115px" width="70" height="22"><rect x="0" y="1" width="4" height="1.1" fill="#89ddff" opacity="0.4"/><rect x="5" y="1" width="14" height="1.1" fill="#a6accd" opacity="0.4"/><rect x="20" y="1" width="6" height="1.1" fill="#89ddff" opacity="0.4"/><rect x="27" y="1" width="5" height="1.1" fill="#a6accd" opacity="0.4"/><rect x="0" y="5" width="28" height="1.1" fill="#676e95" opacity="0.4"/><rect x="0" y="7" width="4" height="1.1" fill="#89ddff" opacity="0.4"/><rect x="5" y="7" width="7" height="1.1" fill="#a6accd" opacity="0.4"/><rect x="13" y="7" width="6" height="1.1" fill="#89ddff" opacity="0.4"/><rect x="20" y="7" width="8" height="1.1" fill="#a6accd" opacity="0.4"/><rect x="0" y="11" width="5" height="1.1" fill="#c792ea" opacity="0.4"/><rect x="6" y="11" width="13" height="1.1" fill="#ffcb6b" opacity="0.4"/><rect x="20" y="11" width="16" height="1.1" fill="#c3e88d" opacity="0.4"/><rect x="4" y="13" width="12" height="1.1" fill="#a6accd" opacity="0.4"/><rect x="18" y="13" width="10" height="1.1" fill="#c3e88d" opacity="0.4"/><rect x="30" y="13" width="12" height="1.1" fill="#c3e88d" opacity="0.4"/><rect x="44" y="13" width="12" height="1.1" fill="#c3e88d" opacity="0.4"/><rect x="0" y="17" width="11" height="1.1" fill="#a6accd" opacity="0.4"/><rect x="12" y="17" width="8" height="1.1" fill="#82aaff" opacity="0.4"/><rect x="21" y="17" width="22" height="1.1" fill="#82aaff" opacity="0.4"/></svg>
<div class="abs" style="left:1351.5px;top:115px;width:14.5px;height:603px;background:#2a2e3f;border-left:1px solid #262a3a;box-sizing:border-box;"></div>
<div class="abs" style="left:1352px;top:115px;width:14px;height:481px;background:#3a3d52;"></div>
<div class="abs" style="left:1353px;top:190px;width:4px;height:61px;background:#2b6fae;"></div>
<div class="abs" style="left:1357px;top:206px;width:4px;height:15px;background:#9a9ca8;"></div>
<div class="abs" style="left:1352px;top:205.5px;width:14px;height:2px;background:#d7b600;"></div>
<div id="status"></div>
<svg class="ic" style="left:0;top:718px" width="1366" height="22"><circle cx="16.5" cy="5" r="1.6" fill="none" stroke="#676e95" stroke-width="1.2"/><circle cx="23" cy="7" r="1.6" fill="none" stroke="#676e95" stroke-width="1.2"/><circle cx="16.5" cy="17" r="1.6" fill="none" stroke="#676e95" stroke-width="1.2"/><path d="M16.5 6.6 V15.4 M23 8.6 Q23 12 16.8 14" fill="none" stroke="#676e95" stroke-width="1.2"/><path d="M80 9.5 A5.3 5.3 0 0 1 88.5 7.5 M89.5 13.5 A5.3 5.3 0 0 1 81 15" fill="none" stroke="#676e95" stroke-width="1.7"/><path d="M87.5 4.5 L90 8.5 L85.5 9 Z M82 18.5 L79.5 14 L84 13.5 Z" fill="#676e95"/><circle cx="108.5" cy="12" r="5.5" fill="#676e95"/><path d="M106.3 9.8 L110.7 14.2 M110.7 9.8 L106.3 14.2" stroke="#1b1e2b" stroke-width="1.6"/><path d="M135.5 6 L141 17 H130 Z" fill="#676e95"/><path d="M135.5 9.5 V13.5" stroke="#1b1e2b" stroke-width="1.4"/><circle cx="135.5" cy="15.3" r="0.8" fill="#1b1e2b"/><circle cx="1306" cy="12" r="7" fill="#676e95"/><circle cx="1303.5" cy="10" r="1" fill="#1b1e2b"/><circle cx="1308.5" cy="10" r="1" fill="#1b1e2b"/><path d="M1302 13 Q1306 17 1310 13" fill="none" stroke="#1b1e2b" stroke-width="1.3"/><path d="M1329 16 V11 Q1329 6 1335 5.5 Q1341 6 1341 11 V16 Z M1327.5 16.5 H1342.5 M1333.5 18.5 H1336.5" fill="#676e95" stroke="#676e95" stroke-width="1.2"/></svg>
<div class="t" style="left:26.5px;top:721.84px;font-size:12px;line-height:16px;color:#676e95;font-weight:normal;font-style:normal;">master</div>
<div class="t" style="left:118px;top:721.84px;font-size:12px;line-height:16px;color:#676e95;font-weight:normal;font-style:normal;">0</div>
<div class="t" style="left:145px;top:721.84px;font-size:12px;line-height:16px;color:#676e95;font-weight:normal;font-style:normal;">0</div>
<div class="t" style="left:164px;top:721.84px;font-size:12px;line-height:16px;color:#676e95;font-weight:normal;font-style:normal;">Python 3.6.5 (venv)</div>
<div class="t" style="left:1027.7px;top:721.84px;font-size:12px;line-height:16px;color:#676e95;font-weight:normal;font-style:normal;letter-spacing:-0.3px;">Ln 7, Col 60</div>
<div class="t" style="left:1105px;top:721.84px;font-size:12px;line-height:16px;color:#676e95;font-weight:normal;font-style:normal;letter-spacing:-0.3px;">Spaces: 4</div>
<div class="t" style="left:1170px;top:721.84px;font-size:12px;line-height:16px;color:#676e95;font-weight:normal;font-style:normal;">UTF-8</div>
<div class="t" style="left:1217px;top:721.84px;font-size:12px;line-height:16px;color:#676e95;font-weight:normal;font-style:normal;">LF</div>
<div class="t" style="left:1244px;top:721.84px;font-size:12px;line-height:16px;color:#676e95;font-weight:normal;font-style:normal;">Python</div>
<div class="t" style="left:1346px;top:721.84px;font-size:12px;line-height:16px;color:#676e95;font-weight:normal;font-style:normal;">1</div>
<div id="dock"></div>
<svg class="ic" style="left:0;top:740px" width="1366" height="28">
<defs><radialGradient id="ffg" cx="0.4" cy="0.3" r="0.8"><stop offset="0" stop-color="#ffd43b"/><stop offset="0.5" stop-color="#ff7139"/><stop offset="1" stop-color="#e31587"/></radialGradient></defs>
<circle cx="563" cy="12.5" r="11" fill="url(#ffg)"/><circle cx="565" cy="12" r="6" fill="#3a56c5"/>
<path d="M582 4 L591 1 L600 4 V18 L591 22 L582 18 Z" fill="#1f3d6e" stroke="#b8c4d8" stroke-width="1.3"/><path d="M582 4 L591 8 L600 4 M591 8 V22" fill="none" stroke="#b8c4d8" stroke-width="1.3"/>
<rect x="612.6" y="1.5" width="21.4" height="21.5" rx="2" fill="#b9b9b9"/><rect x="614.5" y="3.5" width="17.5" height="7" fill="#d9a06a"/><rect x="619.5" y="15" width="7" height="3" rx="1" fill="none" stroke="#f0f0f0" stroke-width="1"/>
<circle cx="653" cy="12.5" r="11.3" fill="#db4437"/><path d="M653 12.5 L643.2 7 A11.3 11.3 0 0 0 647.4 22.3 Z" fill="#0f9d58"/><path d="M653 12.5 L647.4 22.3 A11.3 11.3 0 0 0 664.3 12.5 Z" fill="#ffcd40"/><circle cx="653" cy="12.5" r="5.2" fill="#fff"/><circle cx="653" cy="12.5" r="4" fill="#4285f4"/>
<path d="M674 4 L689 1 L694 4 V21 L689 24 L674 21 Z" fill="#2b2b2b"/><path d="M689 1 L694 4 V21 L689 24 Z" fill="#3c99d4"/><path d="M676 10 L682 14 L686 10 V18 L682 14 L676 18" fill="none" stroke="#3c99d4" stroke-width="1.8"/>
<rect x="701" y="0.5" width="24" height="24" fill="#0e8ee9"/><circle cx="713" cy="12.5" r="9.5" fill="#fff"/><path d="M706 12.5 H720 M709 9.5 L706 12.5 L709 15.5 M717 9.5 L720 12.5 L717 15.5" fill="none" stroke="#0e8ee9" stroke-width="1.8"/>
<rect x="731" y="0.5" width="24" height="24" fill="#4a4a4a"/><path d="M748 4.5 L737 9.5 L748 15 L737 19.5" fill="none" stroke="#ff9800" stroke-width="3.2"/>
<rect x="763" y="1" width="20" height="20" rx="4" fill="#2da3e6"/><rect x="766.5" y="4.5" width="13" height="13" rx="1" fill="none" stroke="#eaf4fb" stroke-width="2"/><rect x="770" y="8" width="6" height="6" fill="#eaf4fb"/>
<rect x="792.5" y="2.5" width="21" height="19" fill="#1d1d1d" stroke="#dcdcdc" stroke-width="1.2"/><path d="M795.5 6 L798.5 8 L795.5 10 M799 11.5 H802" fill="none" stroke="#e8e8e8" stroke-width="1"/>
<circle cx="653" cy="27" r="1.5" fill="#e95420"/><circle cx="683" cy="27" r="1.5" fill="#e95420"/><circle cx="802" cy="27" r="1.5" fill="#e95420"/>
</svg>
</div>
</body></html>
